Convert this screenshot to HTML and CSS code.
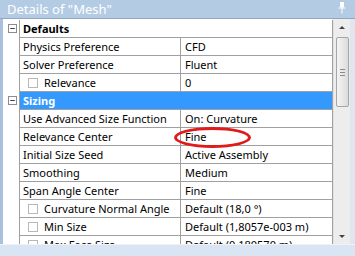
FILE: index.html
```html
<!DOCTYPE html>
<html lang="en">
<head>
  <meta charset="UTF-8">
  <title>Details of "Mesh"</title>
  <link rel="stylesheet" href="styles.css">
</head>
<body>
  <div class="panel">
    <div class="title">
      <span>Details of "Mesh"</span>
      <svg class="pin" width="8" height="12" viewBox="0 0 8 12">
        <path d="M2 0.5h4M2.5 0.5v5M5.5 0.5v5M0.5 6h7M4 6v5.5" stroke="#fff" stroke-width="1" fill="none"/>
        <rect x="3" y="1" width="2" height="4.5" fill="#fff"/>
      </svg>
    </div>
    <div class="body">
      <div class="grid">
        <div class="row cat"><span class="toggle">−</span><div class="span">Defaults</div></div>
        <div class="row"><span class="gut"></span><div class="name">Physics Preference</div><div class="val">CFD</div></div>
        <div class="row"><span class="gut"></span><div class="name">Solver Preference</div><div class="val">Fluent</div></div>
        <div class="row"><span class="gut"></span><div class="name"><i class="check"></i>Relevance</div><div class="val">0</div></div>
        <div class="row cat sel"><span class="toggle">−</span><div class="span">Sizing</div></div>
        <div class="row"><span class="gut"></span><div class="name">Use Advanced Size Function</div><div class="val">On: Curvature</div></div>
        <div class="row"><span class="gut"></span><div class="name">Relevance Center</div><div class="val mark">Fine<i class="ring"></i></div></div>
        <div class="row"><span class="gut"></span><div class="name">Initial Size Seed</div><div class="val">Active Assembly</div></div>
        <div class="row"><span class="gut"></span><div class="name">Smoothing</div><div class="val">Medium</div></div>
        <div class="row"><span class="gut"></span><div class="name">Span Angle Center</div><div class="val">Fine</div></div>
        <div class="row"><span class="gut"></span><div class="name"><i class="check"></i>Curvature Normal Angle</div><div class="val">Default (18,0 °)</div></div>
        <div class="row"><span class="gut"></span><div class="name"><i class="check"></i>Min Size</div><div class="val">Default (1,8057e-003 m)</div></div>
        <div class="row"><span class="gut"></span><div class="name"><i class="check"></i>Max Face Size</div><div class="val">Default (0,180570 m)</div></div>
      </div>
      <div class="scroll">
        <span class="arrow up"></span>
        <div class="thumb"><span class="grip"></span></div>
        <span class="fill"></span>
        <span class="arrow down"></span>
      </div>
      <div class="edge"></div>
    </div>
    <div class="foot"></div>
  </div>
</body>
</html>
```

FILE: styles.css
```css
body {
  margin: 0;
  font-family: "Noto Sans", "Open Sans", sans-serif;
  font-size: 11px;
  color: #000;
  background: #fff;
}
.panel {
  width: 355px;
  height: 256px;
  display: flex;
  flex-direction: column;
  overflow: hidden;
}
.title {
  height: 18px;
  flex: none;
  display: flex;
  align-items: center;
  justify-content: space-between;
  padding: 0 9px 0 7px;
  background: #b4cbe4;
  border-bottom: 1px solid #92a7bf;
  color: #fff;
  font-size: 13px;
}
.pin {
  margin-top: -3px;
}
.body {
  flex: 1;
  display: flex;
  min-height: 0;
  border-left: 3px solid #a9c1dc;
}
.grid {
  width: 330px;
  flex: none;
  padding-top: 1px;
  background: #fff;
  overflow: hidden;
}
.row {
  display: grid;
  grid-template-columns: 16px 162px 1fr;
  height: 18px;
}
.gut {
  display: block;
}
.name, .val, .span {
  border-bottom: 1px solid #a0a0a0;
  border-right: 1px solid #a0a0a0;
  padding-left: 3px;
  display: flex;
  align-items: center;
  white-space: nowrap;
}
.name {
  border-left: 1px solid #a0a0a0;
}
.val {
  padding-left: 4px;
}
.span {
  grid-column: 2 / 4;
  border-left: 1px solid #a0a0a0;
  font-weight: bold;
}
.sel .span {
  background: #3399ff;
  color: #fff;
}
.toggle {
  width: 9px;
  height: 9px;
  margin: 4px 0 0 5px;
  box-sizing: border-box;
  border: 1px solid #8c8c8c;
  background: #fff;
  font-size: 10px;
  line-height: 6px;
  text-align: center;
  color: #000;
}
.check {
  width: 10px;
  height: 10px;
  border: 1px solid #b8b8b8;
  box-sizing: border-box;
  margin: 0 6px 0 5px;
  background: #fff;
}
.mark {
  position: relative;
}
.ring {
  position: absolute;
  left: -7px;
  top: -1px;
  width: 77px;
  height: 21px;
  box-sizing: border-box;
  border: 3px solid #e01b1b;
  border-radius: 50%;
}
.scroll {
  width: 17px;
  flex: none;
  display: flex;
  flex-direction: column;
  align-items: center;
  background: #ededed;
  border-left: 1px solid #e2e2e2;
  box-sizing: border-box;
}
.arrow {
  width: 0;
  height: 0;
  margin: 7px 0 6px;
  border-left: 3px solid transparent;
  border-right: 3px solid transparent;
}
.up {
  border-bottom: 3px solid #444;
}
.down {
  border-top: 3px solid #444;
}
.thumb {
  width: 13px;
  height: 70px;
  box-sizing: border-box;
  margin-top: 2px;
  border: 1px solid #a5a5a5;
  border-radius: 2px;
  background: linear-gradient(to right, #f4f4f4, #dcdcdc);
  display: flex;
  justify-content: center;
  align-items: center;
}
.grip {
  width: 5px;
  height: 5px;
  border-top: 1px solid #8a8a8a;
  border-bottom: 1px solid #8a8a8a;
  background: linear-gradient(#8a8a8a, #8a8a8a) center / 5px 1px no-repeat;
}
.fill {
  flex: 1;
}
.edge {
  flex: 1;
  background: #dfe6ee;
}
.foot {
  height: 11px;
  flex: none;
  background: #d9e5f2;
  border-top: 1px solid #eef3f9;
}
```
